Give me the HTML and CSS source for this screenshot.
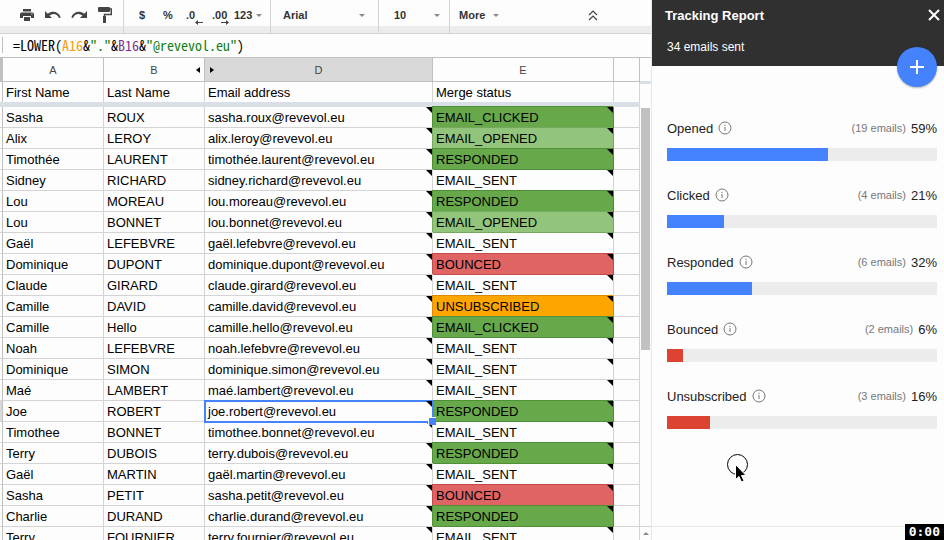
FILE: index.html
```html
<!DOCTYPE html>
<html lang="en">
<head>
    <meta charset="UTF-8">
    <meta name="viewport" content="width=device-width, initial-scale=1.0">
    <title>Tracking Report</title>
    <link rel="stylesheet" href="styles.css">
</head>
<body>
    <main class="sheet">
        <div class="toolbar">
            <div class="group group-edit">
                <button class="tool" aria-label="Print">
                    <svg width="14" height="12" viewBox="0 0 14 12"><path fill="#444" fill-rule="evenodd" d="M3 0h8v2.500H3zM1.500 3.500h11Q14 3.500 14 5v4h-3V7H3v2H0V5q0-1.500 1.500-1.500zM11.500 4.500v1h1v-1zM4 8h6v4H4z"/></svg>
                </button>
                <button class="tool" aria-label="Undo">
                    <svg width="16" height="10" viewBox="0 0 16 10"><path fill="#444" d="M0 1v7h7L4.500 5.500C8 3 12 3.500 14 8l1.700-.6C13.500 1.500 7.500.300 2.800 3.800z"/></svg>
                </button>
                <button class="tool" aria-label="Redo">
                    <svg width="16" height="10" viewBox="0 0 16 10"><path fill="#444" d="M16 1v7H9l2.500-2.500C8 3 4 3.500 2 8L.3 7.400C2.500 1.500 8.500.300 13.200 3.800z"/></svg>
                </button>
                <button class="tool" aria-label="Paint format">
                    <svg width="14" height="16" viewBox="0 0 14 16"><path fill="#444" d="M1 0h10q1 0 1 1v3q0 1-1 1H1Q0 5 0 4V1q0-1 1-1z"/><path fill="none" stroke="#444" stroke-width="1.500" d="M12 2h1.300v5.500H6.500V10"/><path fill="#444" d="M5 9h3v7H5z"/></svg>
                </button>
            </div>
            <div class="group group-format">
                <button class="tool">$</button>
                <button class="tool">%</button>
                <button class="tool decimals">.0
                    <svg width="8" height="5" viewBox="0 0 8 5"><path fill="#444" d="M0 2.500L3 0v2h5v1H3v2z"/></svg>
                </button>
                <button class="tool decimals">.00
                    <svg width="8" height="5" viewBox="0 0 8 5"><path fill="#444" d="M8 2.500L5 0v2H0v1h5v2z"/></svg>
                </button>
                <button class="menu">123
                    <svg class="caret" viewBox="0 0 6 3"><path d="M0 0h6L3 3z"/></svg>
                </button>
            </div>
            <div class="group group-font">
                <label class="picker">
                    <select aria-label="Font"><option>Arial</option></select>
                    <svg class="caret" viewBox="0 0 6 3"><path d="M0 0h6L3 3z"/></svg>
                </label>
            </div>
            <div class="group group-size">
                <label class="picker">
                    <select aria-label="Font size"><option>10</option></select>
                    <svg class="caret" viewBox="0 0 6 3"><path d="M0 0h6L3 3z"/></svg>
                </label>
            </div>
            <div class="group group-more">
                <button class="menu more">More
                    <svg class="caret" viewBox="0 0 6 3"><path d="M0 0h6L3 3z"/></svg>
                </button>
                <button class="tool collapse" aria-label="Hide menus">
                    <svg width="10" height="11" viewBox="0 0 10 11"><path fill="none" stroke="#444" stroke-width="1.200" d="M1 5l4-4 4 4M1 10l4-4 4 4"/></svg>
                </button>
            </div>
        </div>

        <div class="formula-bar">
            <div class="formula" role="textbox" aria-label="Formula" contenteditable="true" spellcheck="false">=LOWER(<span class="ref-a">A16</span>&amp;<span class="str">"."</span>&amp;<span class="ref-b">B16</span>&amp;<span class="str">"@revevol.eu"</span>)</div>
        </div>

        <div class="grid">
            <div class="table-wrap">
                <table>
                    <colgroup>
                        <col class="col-num">
                        <col class="col-name">
                        <col class="col-name">
                        <col>
                        <col class="col-status">
                        <col class="col-rest">
                    </colgroup>
                    <thead>
                        <tr class="letters">
                            <th class="corner"></th>
                            <th>A</th>
                            <th>B
                                <button class="unhide unhide-left" aria-label="Show column C"><svg width="4" height="6" viewBox="0 0 4 6"><path d="M4 0v6L0 3z"/></svg></button>
                            </th>
                            <th class="active">
                                <button class="unhide unhide-right" aria-label="Show column C"><svg width="4" height="6" viewBox="0 0 4 6"><path d="M0 0v6l4-3z"/></svg></button>
                                D</th>
                            <th>E</th>
                            <th></th>
                        </tr>
                        <tr class="titles"><td></td><td>First Name</td><td>Last Name</td><td>Email address</td><td>Merge status</td><td></td></tr>
                        <tr class="freeze"><td colspan="6"></td></tr>
                    </thead>
                    <tbody>
                        <tr><td></td><td>Sasha</td><td>ROUX</td><td class="note">sasha.roux@revevol.eu</td><td class="note green">EMAIL_CLICKED</td><td></td></tr>
                        <tr><td></td><td>Alix</td><td>LEROY</td><td class="note">alix.leroy@revevol.eu</td><td class="note light">EMAIL_OPENED</td><td></td></tr>
                        <tr><td></td><td>Timothée</td><td>LAURENT</td><td class="note">timothée.laurent@revevol.eu</td><td class="note green">RESPONDED</td><td></td></tr>
                        <tr><td></td><td>Sidney</td><td>RICHARD</td><td class="note">sidney.richard@revevol.eu</td><td class="note">EMAIL_SENT</td><td></td></tr>
                        <tr><td></td><td>Lou</td><td>MOREAU</td><td class="note">lou.moreau@revevol.eu</td><td class="note green">RESPONDED</td><td></td></tr>
                        <tr><td></td><td>Lou</td><td>BONNET</td><td class="note">lou.bonnet@revevol.eu</td><td class="note light">EMAIL_OPENED</td><td></td></tr>
                        <tr><td></td><td>Gaël</td><td>LEFEBVRE</td><td class="note">gaël.lefebvre@revevol.eu</td><td class="note">EMAIL_SENT</td><td></td></tr>
                        <tr><td></td><td>Dominique</td><td>DUPONT</td><td class="note">dominique.dupont@revevol.eu</td><td class="note red">BOUNCED</td><td></td></tr>
                        <tr><td></td><td>Claude</td><td>GIRARD</td><td class="note">claude.girard@revevol.eu</td><td class="note">EMAIL_SENT</td><td></td></tr>
                        <tr><td></td><td>Camille</td><td>DAVID</td><td class="note">camille.david@revevol.eu</td><td class="note orange">UNSUBSCRIBED</td><td></td></tr>
                        <tr><td></td><td>Camille</td><td>Hello</td><td class="note">camille.hello@revevol.eu</td><td class="note green">EMAIL_CLICKED</td><td></td></tr>
                        <tr><td></td><td>Noah</td><td>LEFEBVRE</td><td class="note">noah.lefebvre@revevol.eu</td><td class="note">EMAIL_SENT</td><td></td></tr>
                        <tr><td></td><td>Dominique</td><td>SIMON</td><td class="note">dominique.simon@revevol.eu</td><td class="note">EMAIL_SENT</td><td></td></tr>
                        <tr><td></td><td>Maé</td><td>LAMBERT</td><td class="note">maé.lambert@revevol.eu</td><td class="note">EMAIL_SENT</td><td></td></tr>
                        <tr><td class="active"></td><td>Joe</td><td>ROBERT</td><td class="note selected">joe.robert@revevol.eu</td><td class="note green">RESPONDED</td><td></td></tr>
                        <tr><td></td><td>Timothee</td><td>BONNET</td><td class="note">timothee.bonnet@revevol.eu</td><td class="note">EMAIL_SENT</td><td></td></tr>
                        <tr><td></td><td>Terry</td><td>DUBOIS</td><td class="note">terry.dubois@revevol.eu</td><td class="note green">RESPONDED</td><td></td></tr>
                        <tr><td></td><td>Gaël</td><td>MARTIN</td><td class="note">gaël.martin@revevol.eu</td><td class="note">EMAIL_SENT</td><td></td></tr>
                        <tr><td></td><td>Sasha</td><td>PETIT</td><td class="note">sasha.petit@revevol.eu</td><td class="note red">BOUNCED</td><td></td></tr>
                        <tr><td></td><td>Charlie</td><td>DURAND</td><td class="note">charlie.durand@revevol.eu</td><td class="note green">RESPONDED</td><td></td></tr>
                        <tr><td></td><td>Terry</td><td>FOURNIER</td><td class="note">terry.fournier@revevol.eu</td><td class="note">EMAIL_SENT</td><td></td></tr>
                    </tbody>
                </table>
            </div>
            <div class="scrollbar">
                <div class="scroll-head"></div>
                <div class="scroll-track"><div class="scroll-thumb"></div></div>
                <button class="scroll-up" aria-label="Scroll up"><svg width="6" height="3" viewBox="0 0 6 3"><path fill="#888" d="M0 3h6L3 0z"/></svg></button>
            </div>
        </div>
    </main>

    <aside class="sidebar">
        <header>
            <div class="title-row">
                <h1>Tracking Report</h1>
                <button class="close" aria-label="Close"><svg width="12" height="12" viewBox="0 0 12 12"><path stroke="#fff" stroke-width="2" d="M1 1l10 10M11 1L1 11"/></svg></button>
            </div>
            <p class="sent">34 emails sent</p>
            <button class="add" aria-label="New campaign"><svg width="14" height="14" viewBox="0 0 14 14"><path stroke="#fff" stroke-width="2" d="M7 0v14M0 7h14"/></svg></button>
        </header>

        <div class="stats">
            <section class="stat">
                <div class="stat-label">
                    <span>Opened</span>
                    <svg class="info" viewBox="0 0 14 14"><circle cx="7" cy="7" r="6"/><path d="M7 6v4M7 3.800v1.200"/></svg>
                    <span class="count">(19 emails)</span>
                    <span>59%</span>
                </div>
                <div class="bar"><div class="fill" style="width: 59.5%"></div></div>
            </section>
            <section class="stat">
                <div class="stat-label">
                    <span>Clicked</span>
                    <svg class="info" viewBox="0 0 14 14"><circle cx="7" cy="7" r="6"/><path d="M7 6v4M7 3.800v1.200"/></svg>
                    <span class="count">(4 emails)</span>
                    <span>21%</span>
                </div>
                <div class="bar"><div class="fill" style="width: 21%"></div></div>
            </section>
            <section class="stat">
                <div class="stat-label">
                    <span>Responded</span>
                    <svg class="info" viewBox="0 0 14 14"><circle cx="7" cy="7" r="6"/><path d="M7 6v4M7 3.800v1.200"/></svg>
                    <span class="count">(6 emails)</span>
                    <span>32%</span>
                </div>
                <div class="bar"><div class="fill" style="width: 31.6%"></div></div>
            </section>
            <section class="stat">
                <div class="stat-label">
                    <span>Bounced</span>
                    <svg class="info" viewBox="0 0 14 14"><circle cx="7" cy="7" r="6"/><path d="M7 6v4M7 3.800v1.200"/></svg>
                    <span class="count">(2 emails)</span>
                    <span>6%</span>
                </div>
                <div class="bar"><div class="fill fill-bad" style="width: 6%"></div></div>
            </section>
            <section class="stat">
                <div class="stat-label">
                    <span>Unsubscribed</span>
                    <svg class="info" viewBox="0 0 14 14"><circle cx="7" cy="7" r="6"/><path d="M7 6v4M7 3.800v1.200"/></svg>
                    <span class="count">(3 emails)</span>
                    <span>16%</span>
                </div>
                <div class="bar"><div class="fill fill-bad" style="width: 16%"></div></div>
            </section>
        </div>

        <div class="sidebar-foot"></div>
    </aside>

    <svg class="pointer" width="24" height="32" viewBox="0 0 24 32">
        <circle cx="11.500" cy="11.500" r="10" fill="none" stroke="#000"/>
        <path fill="#000" stroke="#fff" d="M9.500 11.500v15l3.500-3 2.500 5.500 2.500-1.200-2.500-5.300h4.500z"/>
    </svg>
    <div class="timer">0:00</div>
</body>
</html>
```

FILE: styles.css
```css
:root {
    --page: #fdfdfd;
    --line: #d4d4d4;
    --strong-line: #c0c0c0;
    --frozen: #d9dfe7;
    --blue: #4582fd;
    --text: #222;
}

* {
    box-sizing: border-box;
}

body {
    display: flex;
    height: 100vh;
    margin: 0;
    overflow: hidden;
    background-color: var(--page);
    color: var(--text);
    font-family: "Liberation Sans", Arial, sans-serif;
    font-size: 13px;
}

button,
select {
    padding: 0;
    border: none;
    background: none;
    color: inherit;
    font: inherit;
    cursor: pointer;
}

svg {
    display: block;
    flex: none;
}

.sheet {
    display: flex;
    flex: 1;
    flex-direction: column;
    min-width: 0;
}

/* toolbar */
.toolbar {
    display: flex;
    height: 34px;
    border-bottom: 1px solid var(--line);
    background: linear-gradient(var(--page) 26px, #ececec 26px);
    color: #333;
    font-size: 11px;
    font-weight: bold;
}

.group {
    display: flex;
    align-items: center;
    padding: 4px 5px 7px;
    border-right: 1px solid var(--line);
}

.group-edit {
    padding-left: 14px;
}

.group-format {
    width: 147px;
}

.group-font {
    width: 108px;
    padding-left: 12px;
}

.group-size {
    width: 71px;
    padding-left: 15px;
}

.group-more {
    flex: 1;
    padding-left: 9px;
    border-right: none;
}

.tool {
    display: flex;
    align-items: center;
    justify-content: center;
    width: 26px;
    height: 22px;
}

.decimals {
    position: relative;
    justify-content: flex-start;
    padding-left: 5px;
}

.decimals svg {
    position: absolute;
    right: 4px;
    bottom: 1px;
}

.menu {
    display: flex;
    align-items: center;
    gap: 4px;
    padding: 0 1px;
}

.more {
    gap: 8px;
    padding: 0;
}

.caret {
    width: 6px;
    height: 3px;
    fill: #888;
}

.picker {
    display: flex;
    flex: 1;
    align-items: center;
    padding-right: 8px;
}

.group-size .picker {
    padding-right: 4px;
}

.picker select {
    flex: 1;
    min-width: 0;
    appearance: none;
}

.collapse {
    margin-right: 40px;
    margin-left: auto;
}

/* formula */
.formula-bar {
    height: 24px;
    padding: 3px 0 4px 2px;
    border-bottom: 1px solid var(--strong-line);
}

.formula {
    padding-left: 10px;
    border-left: 1px solid var(--strong-line);
    color: #000;
    font-family: "Noto Sans Mono CJK SC", "Liberation Mono", monospace;
    font-size: 14px;
    line-height: 16px;
    white-space: nowrap;
}

.ref-a {
    color: #f79a0c;
}

.ref-b {
    color: #7e3794;
}

.str {
    color: #118011;
}

/* grid */
.grid {
    display: flex;
    flex: 1;
    min-height: 0;
}

.table-wrap {
    flex: 1;
    min-width: 0;
    overflow: hidden;
}

table {
    width: 100%;
    border-spacing: 0;
    table-layout: fixed;
    color: #000;
}

.col-num {
    width: 3px;
}

.col-name {
    width: 101px;
}

.col-status {
    width: 181px;
}

.col-rest {
    width: 26px;
}

td,
th {
    height: 21px;
    padding: 2px 0 0;
    border-right: 1px solid var(--line);
    border-bottom: 1px solid var(--line);
    line-height: 18px;
    white-space: nowrap;
}

td:not(:first-child) {
    padding-left: 3px;
}

td:first-child {
    border-right-color: var(--strong-line);
}

.letters th {
    position: relative;
    height: 24px;
    padding-top: 0;
    border-color: var(--strong-line);
    color: #444;
    font-size: 11px;
    font-weight: normal;
}

.letters .corner {
    background-color: var(--strong-line);
}

.letters .active,
td.active {
    background-color: #d9d9d9;
}

.unhide {
    position: absolute;
    top: 9px;
}

.unhide-left {
    right: 4px;
}

.unhide-right {
    left: 5px;
}

.titles td {
    height: 20px;
    border-bottom: none;
}

.freeze td {
    height: 5px;
    padding: 0;
    border: none;
    background-color: var(--frozen);
    line-height: 0;
}

/* small corner marker on cells that carry a note */
.note {
    position: relative;
}

.note::after {
    content: "";
    position: absolute;
    top: 0;
    right: 0;
    border-top: 6px solid #000;
    border-left: 6px solid transparent;
}

.green {
    border-color: #4f8f35;
    background-color: #67a84a;
    box-shadow: -1px -1px 0 #4f8f35;
}

.light {
    border-color: #75a95d;
    background-color: #93c47b;
    box-shadow: -1px -1px 0 #75a95d;
}

.red {
    border-color: #c24a4a;
    background-color: #e06464;
    box-shadow: -1px -1px 0 #c24a4a;
}

.orange {
    border-color: #d98c00;
    background-color: #ffa500;
    box-shadow: -1px -1px 0 #d98c00;
}

.selected {
    z-index: 1;
    outline: 2px solid var(--blue);
    outline-offset: -1px;
}

.selected::before {
    content: "";
    position: absolute;
    right: -4px;
    bottom: -4px;
    z-index: 1;
    width: 7px;
    height: 7px;
    border: 1px solid #fff;
    border-width: 1px 0 0 1px;
    background-color: var(--blue);
}

.scrollbar {
    display: flex;
    flex-direction: column;
    width: 11px;
}

.scroll-head {
    height: 26px;
    border-bottom: 3px solid var(--frozen);
}

.scroll-track {
    flex: 1;
    padding: 24px 1px 0;
}

.scroll-thumb {
    height: 58%;
    background-color: #c1c1c1;
}

.scroll-up {
    display: flex;
    align-items: center;
    justify-content: center;
    height: 14px;
    border-top: 1px solid var(--line);
}

/* sidebar */
.sidebar {
    display: flex;
    flex-direction: column;
    width: 293px;
    border-left: 1px solid #e8e8e8;
}

header {
    position: relative;
    height: 66px;
    padding: 5px 4px 0 13px;
    background-color: #303030;
    color: #fff;
}

.title-row {
    display: flex;
    align-items: center;
    justify-content: space-between;
    height: 20px;
}

h1 {
    margin: 0;
    font-size: 13px;
}

.sent {
    margin: 12px 2px 0;
    font-size: 12px;
    line-height: 20px;
}

.add {
    position: absolute;
    right: 7px;
    bottom: -21px;
    display: flex;
    align-items: center;
    justify-content: center;
    width: 40px;
    height: 40px;
    border-radius: 50%;
    background-color: var(--blue);
    box-shadow: 0 1px 2px rgba(0, 0, 0, 0.3);
}

.stats {
    display: flex;
    flex: 1;
    flex-direction: column;
    gap: 24px;
    padding: 52px 7px 0 15px;
}

.stat-label {
    display: flex;
    align-items: center;
    gap: 5px;
    height: 20px;
    margin-bottom: 10px;
}

.info {
    width: 14px;
    height: 14px;
    fill: none;
    stroke: #777;
}

.count {
    margin-left: auto;
    color: #777;
    font-size: 11px;
}

.bar {
    height: 13px;
    background-color: #ececec;
}

.fill {
    height: 100%;
    background-color: var(--blue);
}

.fill-bad {
    background-color: #dc4330;
}

.sidebar-foot {
    height: 14px;
    border-top: 1px solid #e8e8e8;
}

/* recording overlay */
.pointer {
    position: absolute;
    top: 453px;
    left: 726px;
}

.timer {
    position: absolute;
    right: 0;
    bottom: 0;
    padding: 0 4px;
    background-color: #000;
    color: #fff;
    font-family: "DejaVu Sans Mono", monospace;
    font-weight: bold;
    line-height: 16px;
}
```
